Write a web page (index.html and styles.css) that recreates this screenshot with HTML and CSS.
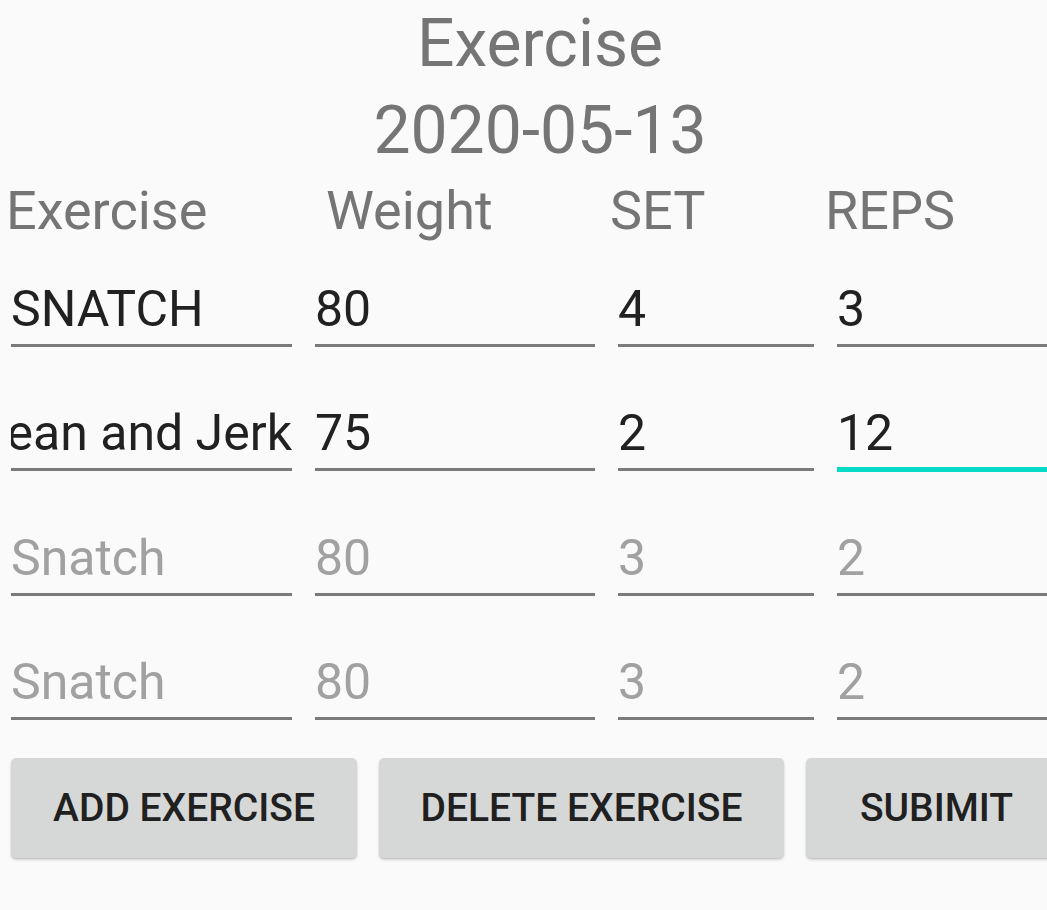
FILE: index.html
```html
<!DOCTYPE html>
<html lang="en">
<head>
<meta charset="utf-8">
<title>Exercise</title>
<link rel="stylesheet" href="styles.css">
</head>
<body>
<main class="screen">
  <header class="title">
    <div class="title-line">Exercise</div>
    <div class="title-line">2020-05-13</div>
  </header>

  <div class="labels">
    <span class="label">Exercise</span>
    <span class="label">Weight</span>
    <span class="label">SET</span>
    <span class="label">REPS</span>
  </div>

  <div class="rows">
    <div class="row">
      <div class="field"><span class="value">SNATCH</span></div>
      <div class="field"><span class="value">80</span></div>
      <div class="field"><span class="value">4</span></div>
      <div class="field"><span class="value">3</span></div>
    </div>
    <div class="row">
      <div class="field field-scrolled"><span class="value">Clean and Jerk</span></div>
      <div class="field"><span class="value">75</span></div>
      <div class="field"><span class="value">2</span></div>
      <div class="field field-focused"><span class="value">12</span></div>
    </div>
    <div class="row">
      <div class="field"><span class="value hint">Snatch</span></div>
      <div class="field"><span class="value hint">80</span></div>
      <div class="field"><span class="value hint">3</span></div>
      <div class="field"><span class="value hint">2</span></div>
    </div>
    <div class="row">
      <div class="field"><span class="value hint">Snatch</span></div>
      <div class="field"><span class="value hint">80</span></div>
      <div class="field"><span class="value hint">3</span></div>
      <div class="field"><span class="value hint">2</span></div>
    </div>
  </div>

  <div class="actions">
    <button class="btn btn-add" type="button">ADD EXERCISE</button>
    <button class="btn btn-delete" type="button">DELETE EXERCISE</button>
    <button class="btn btn-submit" type="button">SUBIMIT</button>
  </div>
</main>
</body>
</html>
```

FILE: styles.css
```css
html, body {
  margin: 0;
  padding: 0;
  background: #fafafa;
  overflow: hidden;
}

body {
  font-family: Roboto, "Noto Sans", "Liberation Sans", sans-serif;
  width: 1047px;
  height: 910px;
}

/* The device screen is wider than the captured window; it is cropped on the right. */
.screen {
  display: flex;
  flex-direction: column;
  width: 1080px;
}

.title {
  text-align: center;
  color: #757575;
  font-size: 66px;
  line-height: 87px;
  height: 174px;
}

.labels {
  display: grid;
  grid-template-columns: 320px 284px 215px 1fr;
  padding-left: 6px;
  margin-top: 2px;
  color: #757575;
  font-size: 54px;
  line-height: 70px;
  white-space: nowrap;
}

.rows {
  display: flex;
  flex-direction: column;
  gap: 56px;
  margin-top: 33px;
}

.row {
  display: grid;
  grid-template-columns: 281px 280px 196px 1fr;
  column-gap: 23px;
  margin-left: 11px;
}

.field {
  display: flex;
  overflow: hidden;
  white-space: nowrap;
  font-size: 50px;
  line-height: 60px;
  height: 60px;
  padding-bottom: 5px;
  border-bottom: 3px solid #7b7b7b;
  color: #212121;
}

.field-scrolled {
  justify-content: flex-end;
}

.field-focused {
  border-bottom: 5px solid #03dac5;
  padding-bottom: 4px;
}

.value {
  flex: none;
}

.hint {
  color: #a1a1a1;
}

.actions {
  display: flex;
  gap: 22px;
  margin-top: 38px;
  margin-left: 11px;
}

.btn {
  flex: none;
  height: 100px;
  border: none;
  border-radius: 5px;
  background: #d6d7d7;
  color: #202020;
  font-family: Roboto, "Noto Sans", "Liberation Sans", sans-serif;
  font-weight: 500;
  font-size: 39px;
  padding: 0;
  box-shadow: 0 2px 3px rgba(0, 0, 0, 0.16), 0 1px 1px rgba(0, 0, 0, 0.08);
  white-space: nowrap;
  text-align: center;
}

.btn-add {
  width: 346px;
}

.btn-delete {
  width: 405px;
}

.btn-submit {
  width: 261px;
}
```
